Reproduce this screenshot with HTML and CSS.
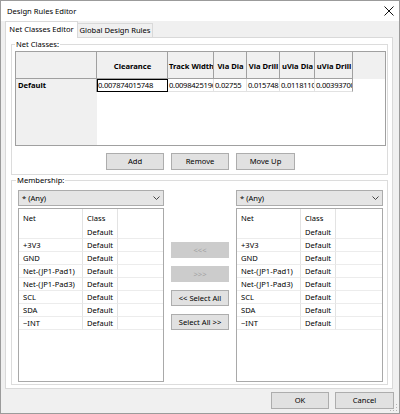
FILE: index.html
```html
<!DOCTYPE html>
<html lang="en">
<head>
    <meta charset="UTF-8">
    <title>Design Rules Editor</title>
    <link rel="stylesheet" href="styles.css">
</head>
<body>
<div class="window">
    <div class="titlebar">
        <span class="title">Design Rules Editor</span>
        <svg class="close" width="10" height="10" viewBox="0 0 10 10">
            <path d="M0.5 0.5 L9.5 9.5 M9.5 0.5 L0.5 9.5" stroke="#111" stroke-width="1" fill="none"/>
        </svg>
    </div>
    <div class="tabs">
        <div class="tab active">Net Classes Editor</div>
        <div class="tab">Global Design Rules</div>
    </div>
    <div class="page">
        <fieldset class="group classes">
            <legend>Net Classes:</legend>
            <div class="grid">
                <table class="grid-table">
                    <colgroup>
                        <col style="width:81px"><col style="width:71px"><col style="width:46px"><col style="width:33px">
                        <col style="width:33px"><col style="width:35px"><col style="width:38px"><col>
                    </colgroup>
                    <tr class="grid-head">
                        <th></th>
                        <th>Clearance</th>
                        <th>Track Width</th>
                        <th>Via Dia</th>
                        <th>Via Drill</th>
                        <th>uVia Dia</th>
                        <th>uVia Drill</th>
                        <th class="blank"></th>
                    </tr>
                    <tr class="grid-row">
                        <th>Default</th>
                        <td class="current">0.007874015748</td>
                        <td>0.0098425196</td>
                        <td>0.02755</td>
                        <td>0.015748</td>
                        <td>0.011811023622</td>
                        <td class="last">0.003937007874</td>
                        <td class="empty"></td>
                    </tr>
                </table>
                <div class="grid-rest"><div class="grid-rest-head"></div></div>
            </div>
            <div class="grid-buttons">
                <button>Add</button>
                <button>Remove</button>
                <button class="wide">Move Up</button>
            </div>
        </fieldset>

        <fieldset class="group membership">
            <legend>Membership:</legend>
            <div class="member-cols">
                <div class="member-side">
                    <div class="combo"><span>* (Any)</span>
                        <svg width="7" height="4" viewBox="0 0 7 4"><path d="M0.5 0.5 L3.5 3.5 L6.5 0.5" stroke="#444" fill="none"/></svg>
                    </div>
                    <div class="list">
                        <table class="list-table">
                            <colgroup><col style="width:64px"><col style="width:35px"><col></colgroup>
                            <tr class="list-head"><td>Net</td><td>Class</td><td></td></tr>
                            <tr><td></td><td>Default</td><td></td></tr>
                            <tr><td>+3V3</td><td>Default</td><td></td></tr>
                            <tr><td>GND</td><td>Default</td><td></td></tr>
                            <tr><td>Net-(JP1-Pad1)</td><td>Default</td><td></td></tr>
                            <tr><td>Net-(JP1-Pad3)</td><td>Default</td><td></td></tr>
                            <tr><td>SCL</td><td>Default</td><td></td></tr>
                            <tr><td>SDA</td><td>Default</td><td></td></tr>
                            <tr><td>~INT</td><td>Default</td><td></td></tr>
                        </table>
                    </div>
                </div>

                <div class="member-mid">
                    <button class="move" disabled>&lt;&lt;&lt;</button>
                    <button class="move" disabled>&gt;&gt;&gt;</button>
                    <button class="move">&lt;&lt; Select All</button>
                    <button class="move">Select All &gt;&gt;</button>
                </div>

                <div class="member-side right">
                    <div class="combo"><span>* (Any)</span>
                        <svg width="7" height="4" viewBox="0 0 7 4"><path d="M0.5 0.5 L3.5 3.5 L6.5 0.5" stroke="#444" fill="none"/></svg>
                    </div>
                    <div class="list">
                        <table class="list-table">
                            <colgroup><col style="width:64px"><col style="width:35px"><col></colgroup>
                            <tr class="list-head"><td>Net</td><td>Class</td><td></td></tr>
                            <tr><td></td><td>Default</td><td></td></tr>
                            <tr><td>+3V3</td><td>Default</td><td></td></tr>
                            <tr><td>GND</td><td>Default</td><td></td></tr>
                            <tr><td>Net-(JP1-Pad1)</td><td>Default</td><td></td></tr>
                            <tr><td>Net-(JP1-Pad3)</td><td>Default</td><td></td></tr>
                            <tr><td>SCL</td><td>Default</td><td></td></tr>
                            <tr><td>SDA</td><td>Default</td><td></td></tr>
                            <tr><td>~INT</td><td>Default</td><td></td></tr>
                        </table>
                    </div>
                </div>
            </div>
        </fieldset>
    </div>
    <div class="footer">
        <button class="ok">OK</button>
        <button class="cancel">Cancel</button>
        <svg class="grip" width="8" height="8" viewBox="0 0 8 8" fill="#b4b4b4">
            <rect x="6" y="0" width="1" height="1"/>
            <rect x="3" y="3" width="1" height="1"/><rect x="6" y="3" width="1" height="1"/>
            <rect x="0" y="6" width="1" height="1"/><rect x="3" y="6" width="1" height="1"/><rect x="6" y="6" width="1" height="1"/>
        </svg>
    </div>
</div>
</body>
</html>
```

FILE: styles.css
```css
* {
    box-sizing: border-box;
}
body {
    margin: 0;
    font-family: "Noto Sans", "Open Sans", sans-serif;
    font-size: 7.6px;
    line-height: 11px;
    color: #000;
}
.window {
    width: 400px;
    height: 414px;
    border: 1px solid #9b9b9b;
    background: #f0f0f0;
    display: flex;
    flex-direction: column;
}
.titlebar {
    height: 20px;
    flex: none;
    background: #fff;
    display: flex;
    align-items: center;
    justify-content: space-between;
    padding: 0 5px 0 6px;
}
.tabs {
    height: 16px;
    flex: none;
    display: flex;
    align-items: flex-end;
    padding-left: 4px;
}
.tab {
    height: 14px;
    width: 75px;
    line-height: 13px;
    text-align: center;
    background: #f0f0f0;
    border: 1px solid #d9d9d9;
    border-left: none;
    border-bottom: none;
    white-space: nowrap;
}
.tab.active {
    width: 73px;
    height: 17px;
    margin-bottom: -1px;
    line-height: 15px;
    background: #fff;
    border-left: 1px solid #d9d9d9;
    position: relative;
    z-index: 1;
}
.page {
    height: 352px;
    flex: none;
    margin: 0 6px 0 4px;
    background: #fff;
    border: 1px solid #d9d9d9;
    padding: 1px 4px 0 5px;
}
.group {
    margin: 0;
    border: 1px solid #dcdcdc;
    min-width: 0;
}
.group legend {
    padding: 0 1px;
    line-height: 11px;
}
.classes {
    padding: 1px 1px 4px 3px;
}
.grid {
    height: 95px;
    border: 1px solid #a0a0a0;
    background: #fff;
    display: flex;
    flex-direction: column;
}
.grid-table {
    width: 100%;
    table-layout: fixed;
    border-collapse: separate;
    border-spacing: 0;
}
.grid-table th, .grid-table td {
    padding: 0 0 0 1px;
    white-space: nowrap;
    overflow: hidden;
    text-overflow: clip;
}
.grid-head th {
    height: 27px;
    padding-top: 3px;
    background: #f0f0f0;
    border-right: 1px solid #a0a0a0;
    border-bottom: 1px solid #a0a0a0;
    text-align: center;
    font-weight: bold;
}
.grid-head th.blank {
    border: none;
}
.grid-row th {
    height: 13px;
    text-align: left;
    padding-left: 2px;
    background: #f0f0f0;
    border-right: 1px solid #a0a0a0;
    font-weight: bold;
}
.grid-row td {
    height: 13px;
    line-height: 11px;
    letter-spacing: -0.25px;
    border-right: 1px solid #e2e2e2;
    border-bottom: 1px solid #e2e2e2;
}
.grid-row td.current {
    outline: 1px solid #000;
    outline-offset: -1px;
}
.grid-row td.last {
    border-right-color: #a0a0a0;
}
.grid-row td.empty {
    border: none;
}
.grid-rest {
    flex: 1;
    display: flex;
}
.grid-rest-head {
    width: 81px;
    background: #f0f0f0;
}
button {
    font-family: inherit;
    font-size: inherit;
    line-height: 11px;
    color: #000;
    background: #e1e1e1;
    border: 1px solid #adadad;
    padding: 0;
    margin: 0;
    border-radius: 0;
}
.grid-buttons {
    margin-top: 7px;
    display: flex;
    justify-content: center;
    gap: 7px;
}
.grid-buttons button {
    width: 58px;
    height: 17px;
}
.grid-buttons button.wide {
    width: 59px;
}
.membership {
    padding: 4px 4px 2px 6px;
}
.membership legend {
    margin-left: -2px;
}
.member-cols {
    height: 192px;
    display: flex;
    gap: 7px;
}
.member-side {
    width: 146px;
    display: flex;
    flex-direction: column;
    gap: 2px;
}
.member-side.right {
    width: 147px;
}
.combo {
    height: 16px;
    flex: none;
    background: #e5e5e5;
    border: 1px solid #acacac;
    padding: 0 3px 0 3px;
    display: flex;
    align-items: center;
    justify-content: space-between;
}
.list {
    flex: 1;
    background: #fff;
    border: 1px solid #a9a9a9;
}
.list-table {
    width: 100%;
    table-layout: fixed;
    border-collapse: separate;
    border-spacing: 0;
}
.list-table td {
    height: 13px;
    padding: 0 0 0 4px;
    line-height: 11px;
    white-space: nowrap;
    overflow: hidden;
    border-bottom: 1px solid #ececec;
}
.list-table td:nth-child(-n+2) {
    border-right: 1px solid #e3e3e3;
}
.list-head td {
    height: 17px;
    border-bottom: none;
    padding-top: 1px;
}
.member-mid {
    width: 58px;
    padding-top: 52px;
    display: flex;
    flex-direction: column;
    gap: 8px;
}
.move {
    height: 16px;
    width: 58px;
}
.move:disabled {
    background: #cccccc;
    border-color: #cccccc;
    color: #a3a3a3;
}
.footer {
    flex: 1;
    position: relative;
    display: flex;
    justify-content: flex-end;
    align-items: flex-start;
    gap: 6px;
    padding: 3px 5px 0 0;
}
.footer button {
    height: 17px;
    width: 58px;
}
.footer .cancel {
    width: 59px;
}
.grip {
    position: absolute;
    right: 1px;
    bottom: 1px;
}
```
